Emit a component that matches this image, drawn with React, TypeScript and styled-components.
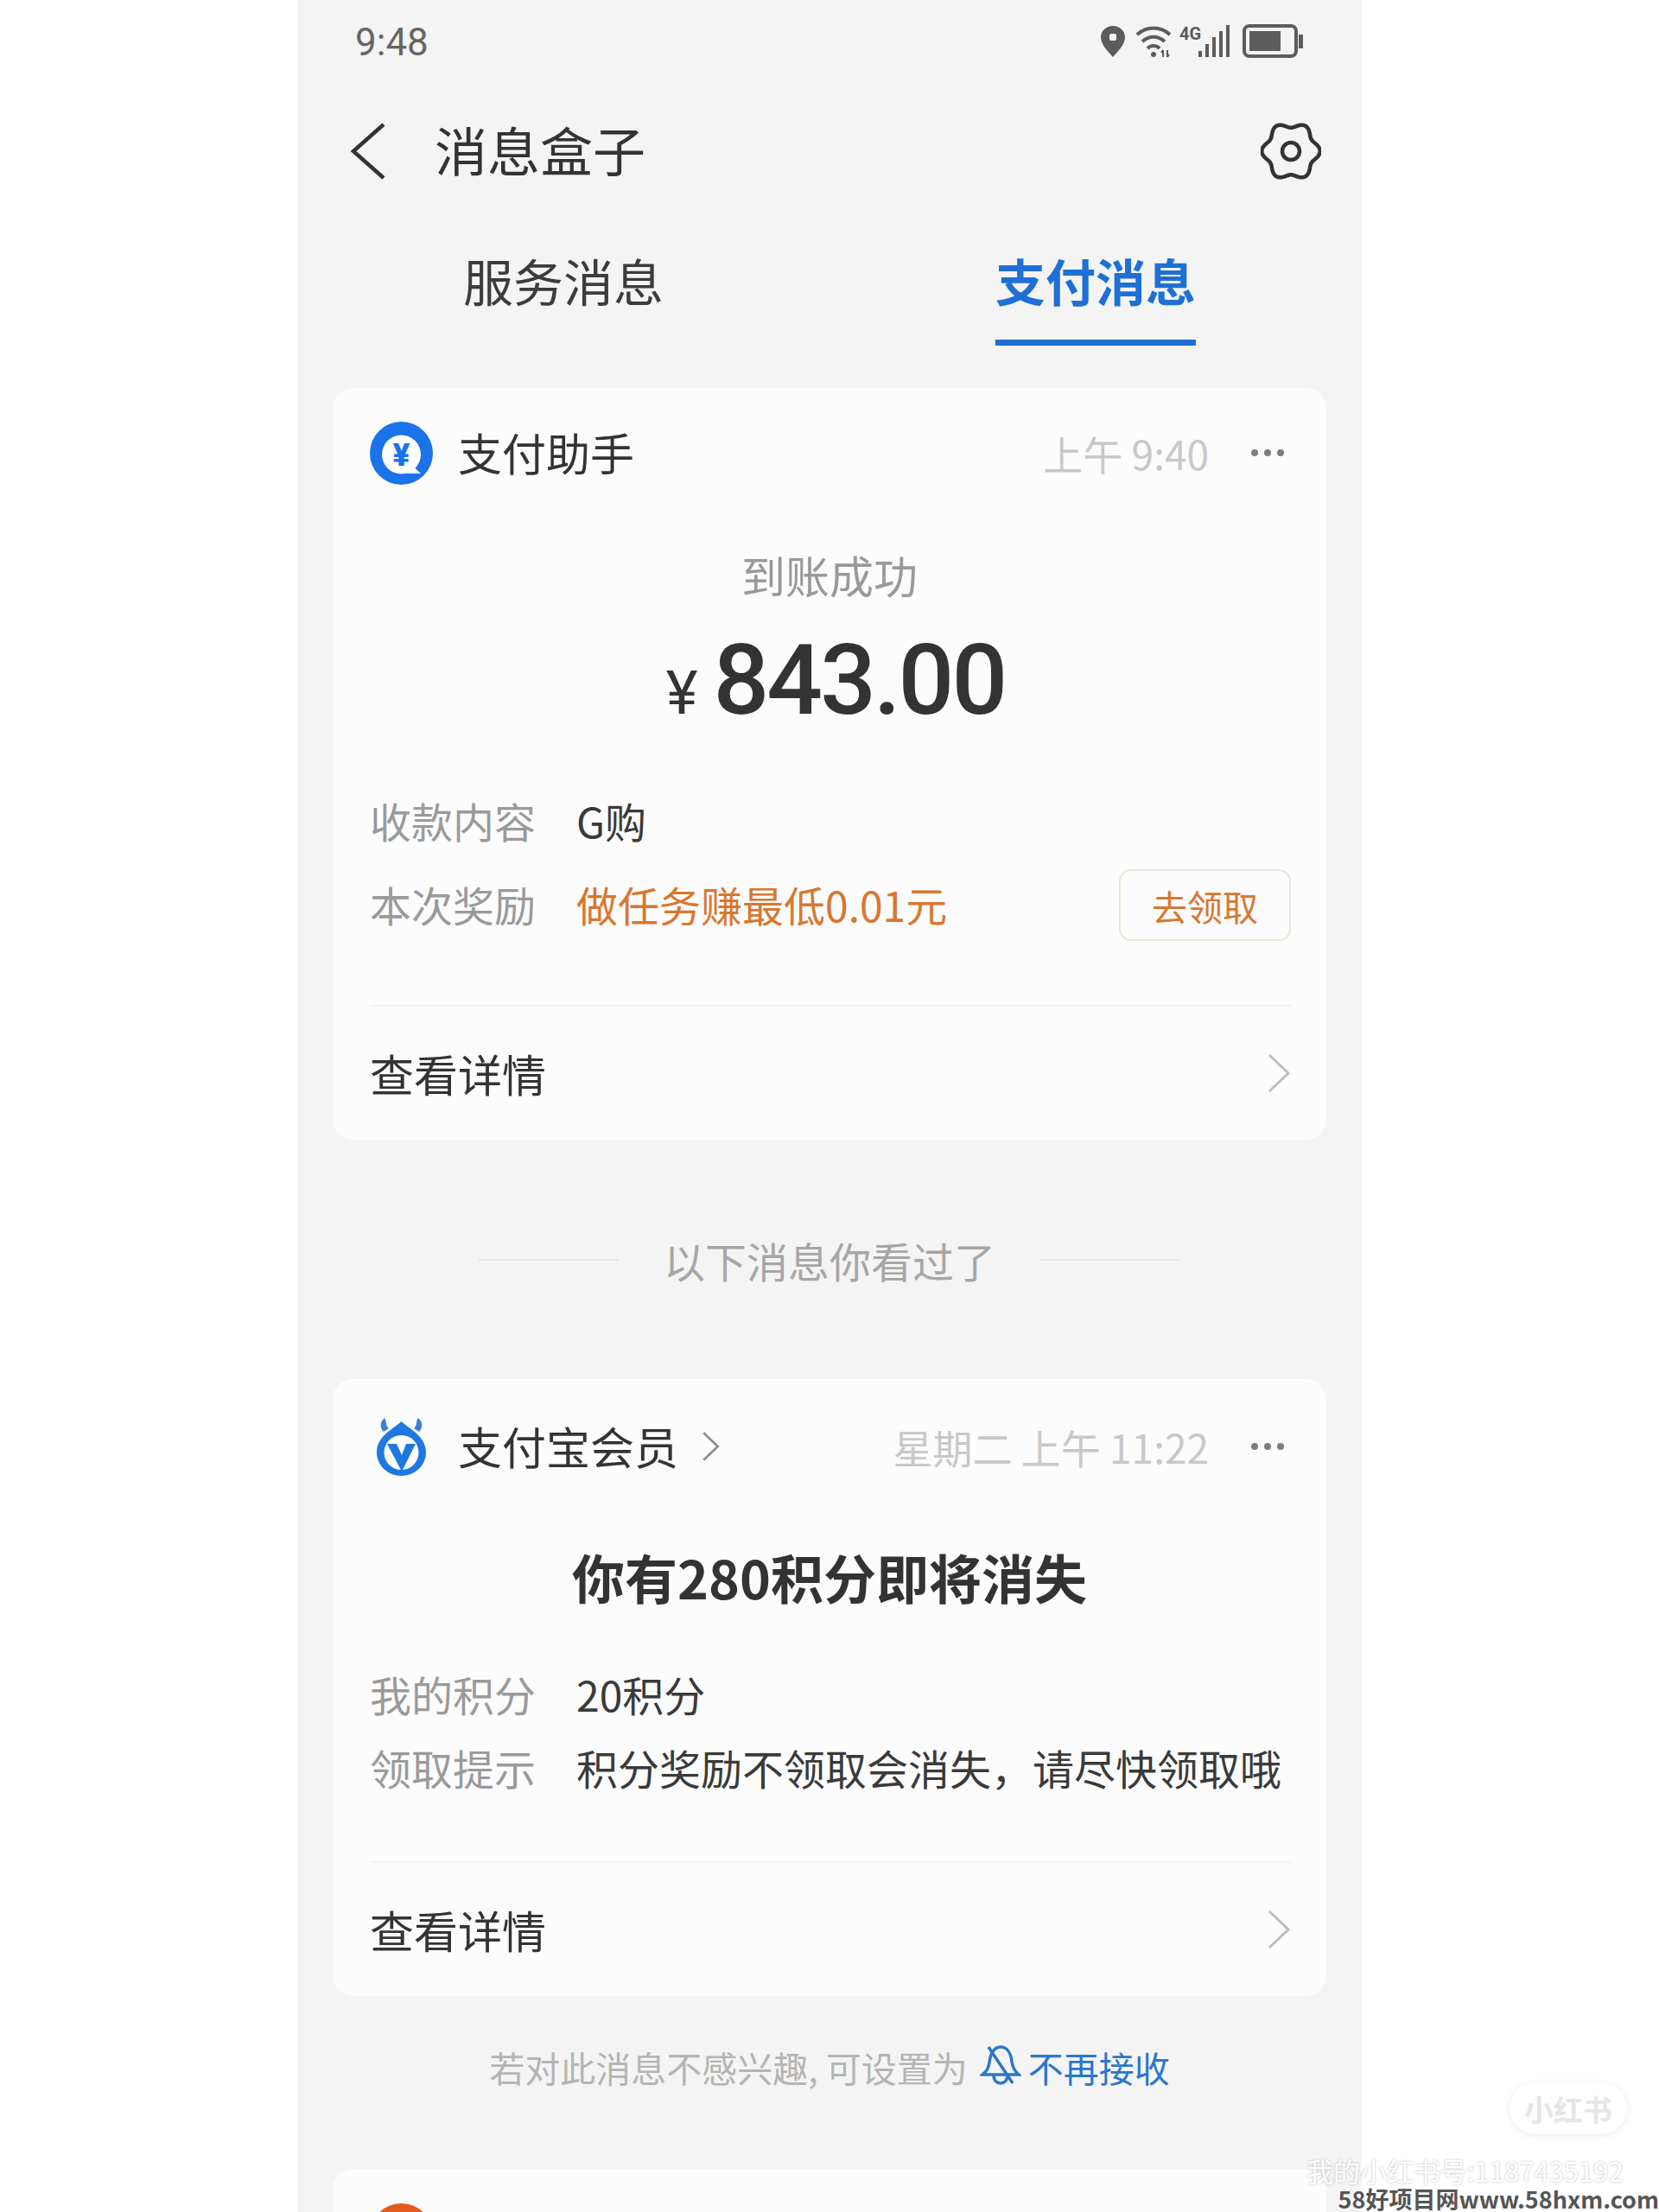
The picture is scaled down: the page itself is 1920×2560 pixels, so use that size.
import React from 'react';
import styled, { createGlobalStyle } from 'styled-components';

const GlobalStyle = createGlobalStyle`
  html, body {
    margin: 0;
    padding: 0;
    background: #ffffff;
  }

  * {
    box-sizing: border-box;
  }
`;

const FONT = `"Noto Sans CJK SC", "Noto Sans", sans-serif`;
const NUM_FONT = `Roboto, "Noto Sans CJK SC", sans-serif`;

const Page = styled.div`
  position: relative;
  width: 1920px;
  height: 2560px;
  overflow: hidden;
  background: #ffffff;
  font-family: ${FONT};
`;

const Phone = styled.div`
  width: 1232px;
  height: 2560px;
  margin-left: 344px;
  background: #f4f4f4;
  overflow: hidden;
`;

const StatusBar = styled.div`
  height: 96px;
  display: flex;
  align-items: center;
  justify-content: space-between;
  padding: 0 68px 0 67px;
`;

const Clock = styled.span`
  font-family: ${NUM_FONT};
  font-size: 44px;
  padding-top: 2px;
  color: #666666;
`;

const NavBar = styled.div`
  height: 158px;
  display: flex;
  align-items: center;
  padding: 0 47px 0 61px;
`;

const NavTitle = styled.h1`
  flex: 1;
  margin: 0 0 6px 56px;
  font-size: 61px;
  font-weight: 400;
  color: #333333;
`;

const Tabs = styled.div`
  height: 146px;
  display: grid;
  grid-template-columns: 1fr 1fr;
`;

const Tab = styled.div<{ $active?: boolean }>`
  display: flex;
  justify-content: center;

  span {
    display: flex;
    align-items: center;
    justify-content: center;
    width: 232px;
    height: 146px;
    font-size: 58px;
    font-weight: ${p => (p.$active ? 700 : 400)};
    color: ${p => (p.$active ? '#1f70d6' : '#3c3c3c')};
    border-bottom: 7px solid ${p => (p.$active ? '#1f6fd0' : 'transparent')};
  }
`;

const Card = styled.section<{ $top?: number }>`
  display: flow-root;
  margin: ${p => p.$top ?? 0}px 41px 0;
  background: #fcfcfc;
  border-radius: 24px;
`;

const CardHeader = styled.div<{ $height: number }>`
  height: ${p => p.$height}px;
  display: flex;
  align-items: center;
  padding: 0 49px 0 43px;
`;

const IconSlot = styled.div`
  width: 73px;
  display: flex;
  justify-content: center;
`;

const SenderName = styled.span`
  margin-left: 29px;
  margin-bottom: 2px;
  font-size: 51px;
  color: #333333;
`;

const SenderArrow = styled.svg`
  margin-left: 27px;
`;

const SentTime = styled.span`
  margin-left: auto;
  font-size: 46px;
  color: #c8c8c8;
`;

const MoreDots = styled.div`
  display: flex;
  gap: 7px;
  margin-left: 49px;

  i {
    width: 8px;
    height: 8px;
    border-radius: 50%;
    background: #7d7d7d;
  }
`;

const Caption = styled.div`
  height: 60px;
  margin-top: 36px;
  line-height: 60px;
  text-align: center;
  font-size: 51px;
  color: #999999;
`;

const Amount = styled.div`
  display: flex;
  justify-content: center;
  align-items: baseline;
  height: 130px;
  margin-top: 27px;
  padding-left: 14px;
  font-family: ${NUM_FONT};
  color: #333333;

  small {
    font-size: 70px;
    margin-right: 18px;
  }

  b {
    font-size: 114px;
    font-weight: 500;
    line-height: 130px;
    letter-spacing: -3px;
  }
`;

const Headline = styled.h2`
  height: 76px;
  margin: 35px 0 0;
  line-height: 76px;
  text-align: center;
  font-size: 61px;
  font-weight: 700;
  color: #333333;
`;

const InfoList = styled.div<{ $top: number; $gap: number; $bottom: number }>`
  display: flex;
  flex-direction: column;
  gap: ${p => p.$gap}px;
  margin: ${p => p.$top}px 41px ${p => p.$bottom}px 43px;
`;

const InfoRow = styled.div`
  display: grid;
  grid-template-columns: 239px 1fr auto;
  align-items: center;
  min-height: 60px;
  line-height: 60px;
  font-size: 48px;
`;

const InfoLabel = styled.span`
  color: #9a9a9a;
`;

const InfoValue = styled.span<{ $accent?: boolean }>`
  white-space: nowrap;
  color: ${p => (p.$accent ? '#d9772f' : '#3a3a3a')};
`;

const ClaimButton = styled.div`
  width: 199px;
  height: 83px;
  margin-top: 3px;
  display: flex;
  align-items: center;
  justify-content: center;
  border: 2px solid #ece4d8;
  border-radius: 14px;
  font-size: 41px;
  color: #d9772f;
`;

const DetailRow = styled.div`
  height: 156px;
  margin: 0 41px 0 43px;
  display: flex;
  align-items: center;
  justify-content: space-between;
  border-top: 2px solid #f2f2f2;
  font-size: 51px;
  color: #333333;
`;

const SeenDivider = styled.div`
  height: 277px;
  display: flex;
  align-items: center;
  justify-content: center;
  gap: 52px;
  font-size: 48px;
  color: #a6a6a6;

  i {
    width: 162px;
    height: 2px;
    background: #e6e6e6;
  }
`;

const MuteHint = styled.div`
  height: 200px;
  display: flex;
  align-items: center;
  justify-content: center;
  padding-bottom: 36px;
  font-size: 41px;
  color: #b4b4b4;

  svg {
    margin: 0 8px 6px 14px;
  }

  b {
    font-weight: 400;
    color: #2a78c9;
  }
`;

const OrangeDot = styled.div`
  width: 73px;
  height: 73px;
  margin: 40px 0 0 43px;
  border-radius: 50%;
  background: #e25a1c;
`;

// watermarks sitting on top of the screenshot
const RedBookBadge = styled.div`
  position: absolute;
  left: 1747px;
  top: 2410px;
  width: 136px;
  height: 60px;
  display: flex;
  align-items: center;
  justify-content: center;
  border-radius: 30px;
  background: #ffffff;
  box-shadow: 0 2px 8px rgba(0, 0, 0, 0.08);
  font-size: 34px;
  font-weight: 700;
  color: #e6e6e6;
`;

const AccountMark = styled.div`
  position: absolute;
  left: 1512px;
  top: 2496px;
  font-size: 31px;
  line-height: 32px;
  white-space: nowrap;
  color: #ffffff;
  text-shadow: 0 0 3px rgba(0, 0, 0, 0.28);
`;

const SiteMark = styled.div`
  position: absolute;
  right: 0;
  top: 2530px;
  font-size: 27px;
  line-height: 30px;
  font-weight: 700;
  white-space: nowrap;
  color: #555555;
  text-shadow: 0 0 3px #ffffff;
`;

const gearPath = (() => {
  const pts: string[] = [];
  for (let i = 0; i < 180; i++) {
    const a = (i / 180) * Math.PI * 2;
    const r = 30.5 + 3.2 * Math.cos(6 * a);
    pts.push(`${(35 + r * Math.cos(a)).toFixed(2)} ${(34 + r * Math.sin(a)).toFixed(2)}`);
  }
  return `M${pts.join('L')}Z`;
})();

const StatusIcons = () => (
  <svg width="236" height="40" viewBox="0 0 236 40">
    <path d="M16 2c8 0 14 6 14 13 0 9-9 17-14 23C11 32 2 24 2 15 2 8 8 2 16 2z" fill="#5c5c5c" />
    <rect x="12" y="11" width="8" height="8" rx="2" fill="#f4f4f4" />
    <g fill="none" stroke="#5c5c5c" strokeWidth="4">
      <path d="M44 12C55 2 71 2 82 12" />
      <path d="M50 20C58 13 68 13 76 20" />
      <path d="M56 28C60 24 66 24 70 28" />
    </g>
    <circle cx="63" cy="35" r="3" fill="#5c5c5c" />
    <path d="M74 30v8M79 30v8M72 33l2-3M81 35l-2 3" stroke="#5c5c5c" strokeWidth="2" />
    <text x="93" y="18" fontFamily="Roboto, sans-serif" fontSize="20" fontWeight="700" fill="#5c5c5c">
      4G
    </text>
    <g fill="#5c5c5c">
      <rect x="115" y="31" width="4" height="7" />
      <rect x="123" y="23" width="4" height="15" />
      <rect x="131" y="15" width="4" height="23" />
      <rect x="139" y="8" width="4" height="30" />
      <rect x="147" y="1" width="4" height="37" />
    </g>
    <rect x="168" y="2" width="60" height="35" rx="6" fill="none" stroke="#5c5c5c" strokeWidth="4" />
    <rect x="174" y="8" width="36" height="23" fill="#5c5c5c" />
    <rect x="231" y="12" width="5" height="16" fill="#5c5c5c" />
  </svg>
);

const BackIcon = () => (
  <svg width="42" height="66" viewBox="0 0 42 66">
    <path d="M39 2L4 33l35 31" fill="none" stroke="#333333" strokeWidth="4.5" />
  </svg>
);

const GearIcon = () => (
  <svg width="70" height="68" viewBox="0 0 70 68">
    <path d={gearPath} fill="none" stroke="#333333" strokeWidth="4.5" />
    <circle cx="35" cy="34" r="10" fill="none" stroke="#333333" strokeWidth="4.5" />
  </svg>
);

const PayHelperIcon = () => (
  <svg width="73" height="73" viewBox="0 0 73 73">
    <circle cx="36.5" cy="36.5" r="36.5" fill="#1a73e8" />
    <circle cx="36.5" cy="38" r="22.500" fill="#ffffff" />
    <path d="M46 48l13 12H40z" fill="#ffffff" />
    <text x="36.500" y="51" textAnchor="middle" fontFamily="Roboto, sans-serif" fontSize="37" fontWeight="900" fill="#1a73e8">
      ¥
    </text>
  </svg>
);

const MemberIcon = () => (
  <svg width="57" height="67" viewBox="0 0 57 67">
    <path d="M8 16C3 11 4 4 9 0c3 4 1 9 5 12zM49 16c5-5 4-12-1-16-3 4-1 9-5 12z" fill="#3a80d8" />
    <path d="M28.500 4C36 12 57 20 57 40c0 15-13 27-28.500 27S0 55 0 40C0 20 21 12 28.500 4z" fill="#1f78e0" />
    <circle cx="28.500" cy="40" r="20" fill="#ffffff" />
    <path d="M12 30h11l6 13 5-13h11L29 62z" fill="#1f78e0" />
  </svg>
);

const Chevron = ({ color, width, height }: { color: string; width: number; height: number }) => (
  <SenderArrow width={width} height={height} viewBox="0 0 28 46">
    <path d="M3 2l22 21L3 44" fill="none" stroke={color} strokeWidth="3.5" />
  </SenderArrow>
);

const DetailArrow = () => (
  <svg width="28" height="46" viewBox="0 0 28 46">
    <path d="M3 2l22 21L3 44" fill="none" stroke="#bdbdbd" strokeWidth="3" />
  </svg>
);

const BellOffIcon = () => (
  <svg width="48" height="48" viewBox="0 0 46 48">
    <g fill="none" stroke="#2a78c9" strokeWidth="3.5">
      <path d="M2 36c5-4 7-7 8-14 1-9 5-18 13-18s12 8 13 17c1 7 3 11 8 15z" />
      <path d="M15 37c0 6 4 9 8 9s8-3 8-9" />
      <path d="M9 4l28 42" />
    </g>
  </svg>
);

const Dots = () => (
  <MoreDots>
    <i />
    <i />
    <i />
  </MoreDots>
);

const App = () => (
  <Page>
    <GlobalStyle />
    <Phone>
      <StatusBar>
        <Clock>9:48</Clock>
        <StatusIcons />
      </StatusBar>

      <NavBar>
        <BackIcon />
        <NavTitle>消息盒子</NavTitle>
        <GearIcon />
      </NavBar>

      <Tabs>
        <Tab>
          <span>服务消息</span>
        </Tab>
        <Tab $active>
          <span>支付消息</span>
        </Tab>
      </Tabs>

      <Card $top={49}>
        <CardHeader $height={150}>
          <IconSlot>
            <PayHelperIcon />
          </IconSlot>
          <SenderName>支付助手</SenderName>
          <SentTime>上午 9:40</SentTime>
          <Dots />
        </CardHeader>
        <Caption>到账成功</Caption>
        <Amount>
          <small>¥</small>
          <b>843.00</b>
        </Amount>
        <InfoList $top={67} $gap={24} $bottom={74}>
          <InfoRow>
            <InfoLabel>收款内容</InfoLabel>
            <InfoValue>G购</InfoValue>
          </InfoRow>
          <InfoRow>
            <InfoLabel>本次奖励</InfoLabel>
            <InfoValue $accent>做任务赚最低0.01元</InfoValue>
            <ClaimButton>去领取</ClaimButton>
          </InfoRow>
        </InfoList>
        <DetailRow>
          查看详情
          <DetailArrow />
        </DetailRow>
      </Card>

      <SeenDivider>
        <i />
        以下消息你看过了
        <i />
      </SeenDivider>

      <Card>
        <CardHeader $height={156}>
          <IconSlot>
            <MemberIcon />
          </IconSlot>
          <SenderName>支付宝会员</SenderName>
          <Chevron color="#8c8c8c" width={21} height={36} />
          <SentTime>星期二 上午 11:22</SentTime>
          <Dots />
        </CardHeader>
        <Headline>你有280积分即将消失</Headline>
        <InfoList $top={67} $gap={25} $bottom={79}>
          <InfoRow>
            <InfoLabel>我的积分</InfoLabel>
            <InfoValue>20积分</InfoValue>
          </InfoRow>
          <InfoRow>
            <InfoLabel>领取提示</InfoLabel>
            <InfoValue>积分奖励不领取会消失，请尽快领取哦</InfoValue>
          </InfoRow>
        </InfoList>
        <DetailRow>
          查看详情
          <DetailArrow />
        </DetailRow>
      </Card>

      <MuteHint>
        若对此消息不感兴趣, 可设置为
        <BellOffIcon />
        <b>不再接收</b>
      </MuteHint>

      <Card>
        <OrangeDot />
      </Card>
    </Phone>

    <RedBookBadge>小红书</RedBookBadge>
    <AccountMark>我的小红书号:1187435192</AccountMark>
    <SiteMark>58好项目网www.58hxm.com</SiteMark>
  </Page>
);

export default App;
